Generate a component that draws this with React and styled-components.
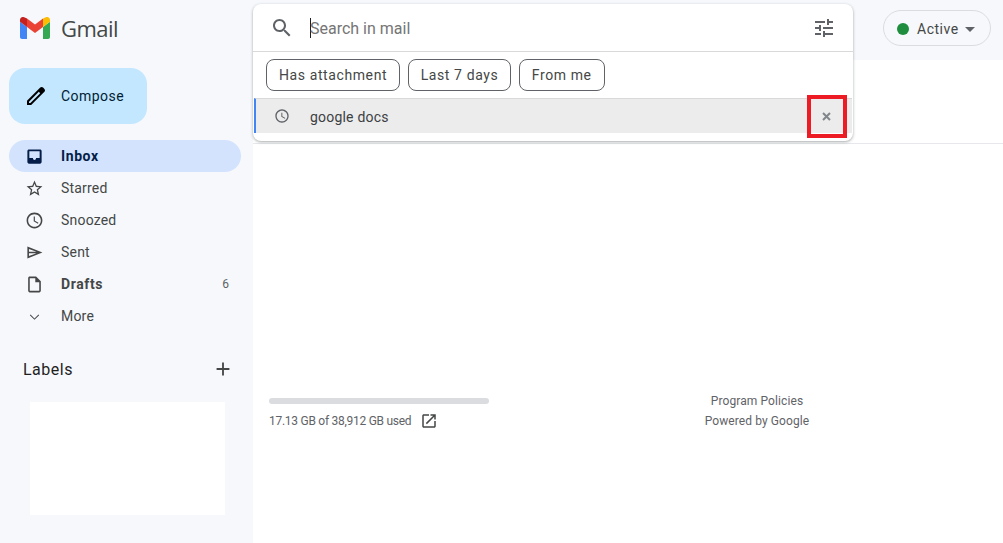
import React from "react";
import styled, { createGlobalStyle } from "styled-components";

const Global = createGlobalStyle`
  html, body { margin: 0; padding: 0; height: 100%; overflow: hidden; }
  body { font-family: Roboto, "Liberation Sans", sans-serif; background: #fff; }
`;

const Page = styled.div`
  display: flex;
  width: 1003px;
  height: 543px;
  overflow: hidden;
`;

const Sidebar = styled.aside`
  width: 253px;
  flex: none;
  background: #f6f8fc;
  display: flex;
  flex-direction: column;
`;

const Brand = styled.div`
  height: 56px;
  display: flex;
  align-items: center;
  padding-left: 20px;
  gap: 11px;
  color: #444746;
  font-family: "Open Sans", Roboto, sans-serif;
  font-size: 22px;
  letter-spacing: -0.55px;
`;

const Compose = styled.div`
  margin: 12px 0 16px 9px;
  width: 138px;
  height: 56px;
  border-radius: 16px;
  background: #c2e7ff;
  color: #001d35;
  display: flex;
  align-items: center;
  padding-left: 15px;
  box-sizing: border-box;
  gap: 13px;
  font-size: 14px;
  font-weight: 400;
  letter-spacing: 0.45px;
`;

const Nav = styled.nav`
  display: flex;
  flex-direction: column;
  width: 232px;
  margin-left: 9px;
`;

const NavRow = styled.div`
  height: 32px;
  border-radius: 16px;
  display: flex;
  align-items: center;
  padding: 0 12px 0 16px;
  gap: 17px;
  font-size: 14px;
  letter-spacing: ${(p) => (p.$bold ? "0.6px" : "0.2px")};
  color: ${(p) => (p.$active ? "#041e49" : "#444746")};
  font-weight: ${(p) => (p.$bold ? 700 : 400)};
  background: ${(p) => (p.$active ? "#d3e3fd" : "transparent")};
`;

const NavLabel = styled.span`
  flex: 1;
`;

const Count = styled.span`
  font-size: 12px;
  font-weight: 400;
  letter-spacing: 0;
  color: #5f6368;
`;

const LabelsHead = styled.div`
  margin: 25px 19px 0 23px;
  height: 24px;
  display: flex;
  align-items: center;
  justify-content: space-between;
  font-size: 16px;
  letter-spacing: 0.5px;
  color: #1f1f1f;
`;

const LabelsBox = styled.div`
  margin: 21px 0 0 30px;
  width: 195px;
  height: 113px;
  background: #fff;
`;

const Main = styled.main`
  position: relative;
  flex: 1;
  display: flex;
  flex-direction: column;
  background: #fff;
`;

const TopBar = styled.header`
  height: 60px;
  flex: none;
  background: #f6f8fc;
  display: flex;
  justify-content: flex-end;
  padding: 10px 12px 0 0;
  box-sizing: border-box;
`;

const StatusPill = styled.div`
  width: 108px;
  height: 36px;
  box-sizing: border-box;
  border: 1px solid #dadce0;
  border-radius: 18px;
  display: flex;
  align-items: center;
  padding: 2px 0 0 13px;
  font-size: 14px;
  font-weight: 400;
  letter-spacing: 0.5px;
  color: #444746;
`;

const Dot = styled.span`
  width: 12px;
  height: 12px;
  border-radius: 50%;
  background: #1e8e3e;
  margin-right: 8px;
`;

const Caret = styled.span`
  width: 0;
  height: 0;
  margin-left: 6px;
  border-left: 5px solid transparent;
  border-right: 5px solid transparent;
  border-top: 5px solid #5f6368;
`;

const Divider = styled.div`
  height: 83px;
  flex: none;
  border-bottom: 1px solid #e6e8eb;
`;

const Footer = styled.footer`
  display: flex;
  justify-content: space-between;
  padding: 254px 0 0 16px;
  font-size: 12px;
  color: #5f6368;
`;

const Storage = styled.div`
  width: 220px;
`;

const StorageBar = styled.div`
  height: 6px;
  border-radius: 3px;
  background: #dadce0;
`;

const StorageText = styled.div`
  margin-top: 8px;
  display: flex;
  align-items: center;
  gap: 9px;
  letter-spacing: -0.27px;
  white-space: nowrap;
`;

const Policies = styled.div`
  width: 108px;
  margin-right: 192px;
  margin-top: -7px;
  text-align: center;
  line-height: 20px;
  letter-spacing: 0.1px;
  white-space: nowrap;
`;

/* The search dropdown floats over the page */
const SearchPanel = styled.div`
  position: absolute;
  left: 0;
  top: 4px;
  width: 600px;
  height: 137px;
  background: #fff;
  border-radius: 8px;
  box-shadow: 0 1px 3px rgba(60, 64, 67, 0.45);
  display: flex;
  flex-direction: column;
  overflow: hidden;
`;

const SearchRow = styled.div`
  height: 48px;
  flex: none;
  box-sizing: border-box;
  display: flex;
  align-items: center;
  padding: 0 17px;
  border-bottom: 1px solid #d9d9d9;
`;

const SearchInput = styled.div`
  flex: 1;
  margin: 1px 0 0 16px;
  height: 20px;
  display: flex;
  align-items: center;
  font-size: 16px;
  color: #757575;
  border-left: 1px solid #1f1f1f;
`;

const Placeholder = styled.span`
  margin-left: -1px;
`;

const Chips = styled.div`
  height: 46px;
  flex: none;
  box-sizing: border-box;
  display: flex;
  gap: 7.5px;
  padding: 7px 0 0 13px;
`;

const Chip = styled.div`
  height: 32px;
  box-sizing: border-box;
  padding: 0 12px;
  border: 1px solid #5f6368;
  border-radius: 8px;
  display: flex;
  align-items: center;
  font-size: 14px;
  font-weight: 400;
  letter-spacing: 0.6px;
  color: #444746;
`;

const Suggestion = styled.div`
  height: 35px;
  flex: none;
  box-sizing: border-box;
  margin: 0 1px;
  background: #ececec;
  border-top: 1px solid #d9d9d9;
  border-left: 2px solid #4285f4;
  display: flex;
  align-items: center;
  padding-left: 18px;
  gap: 20px;
  font-size: 14px;
  letter-spacing: 0.2px;
  color: #3c4043;
`;

const SuggestionText = styled.span`
  flex: 1;
  padding-top: 2px;
`;

const RemoveX = styled.svg`
  margin-right: 21px;
`;

/* Red annotation rectangle drawn over the screenshot */
const Annotation = styled.div`
  position: absolute;
  left: 554px;
  top: 95px;
  width: 40px;
  height: 43px;
  box-sizing: border-box;
  border: 4px solid #ed1c24;
`;

const IconSvg = styled.svg`
  flex: none;
  fill: ${(p) => p.$color};
`;

const Icon = ({ d, size = 24, color = "#444746" }) => (
  <IconSvg width={size} height={size} viewBox="0 0 24 24" $color={color}>
    <path d={d} fillRule="evenodd" />
  </IconSvg>
);

const icons = {
  search: "M15.5 14h-.79l-.28-.27C15.41 12.59 16 11.11 16 9.5 16 5.91 13.09 3 9.5 3S3 5.91 3 9.5 5.91 16 9.5 16c1.61 0 3.09-.59 4.23-1.57l.27.28v.79l5 4.99L20.49 19l-4.99-5zm-6 0C7.01 14 5 11.99 5 9.5S7.01 5 9.5 5 14 7.01 14 9.5 11.99 14 9.5 14z",
  tune: "M3 17v2h6v-2H3zM3 5v2h10V5H3zm10 16v-2h8v-2h-8v-2h-2v6h2zM7 9v2H3v2h4v2h2V9H7zm14 4v-2H11v2h10zm-6-4h2V7h4V5h-4V3h-2v6z",
  schedule: "M11.99 2C6.47 2 2 6.48 2 12s4.47 10 9.99 10C17.52 22 22 17.52 22 12S17.52 2 11.99 2zM12 20c-4.42 0-8-3.58-8-8s3.58-8 8-8 8 3.58 8 8-3.58 8-8 8zm.5-13H11v6l5.25 3.15.75-1.23-4.5-2.67z",
  inbox: "M5 3h14c1.1 0 2 .9 2 2v14c0 1.1-.9 2-2 2H5c-1.1 0-2-.9-2-2V5c0-1.1.9-2 2-2zM5.5 5.5v8.5h4.500c0 1.400 1 2.500 2 2.500s2-1.100 2-2.500h4.500V5.500z",
  star: "M22 9.24l-7.19-.62L12 2 9.19 8.63 2 9.24l5.46 4.73L5.82 21 12 17.27 18.18 21l-1.63-7.03L22 9.24zM12 15.4l-3.76 2.27 1-4.28-3.32-2.88 4.38-.38L12 6.1l1.71 4.04 4.38.38-3.32 2.88 1 4.28L12 15.4z",
  send: "M3 4.500L22 12 3 19.500zM5 7.500V11h9.500zM5 13v3.500L14.500 13z",
  draft: "M14 2H6c-1.1 0-1.99.9-1.99 2L4 20c0 1.1.89 2 1.99 2H18c1.1 0 2-.9 2-2V8l-6-6zM6 20V4h7v5h5v11H6z",
  more: "M17 9.4L12 14.4 7 9.4 6.1 10.3 12 16.2 17.9 10.3z",
  add: "M19 13h-6v6h-2v-6H5v-2h6V5h2v6h6v2z",
  open: "M19 19H5V5h7V3H5c-1.11 0-2 .9-2 2v14c0 1.1.89 2 2 2h14c1.1 0 2-.9 2-2v-7h-2v7zM14 3v2h3.59l-9.83 9.83 1.41 1.41L19 6.41V10h2V3h-7z",
  edit: "M20.41 4.94l-1.35-1.35c-.78-.78-2.05-.78-2.83 0L3 16.82V21h4.18L20.41 7.77c.79-.78.79-2.05 0-2.83zm-14 14.12L5 19v-1.36l9.82-9.82 1.41 1.41-9.82 9.83z",
};

const GmailLogo = () => (
  <IconSvg width="30" height="22" viewBox="0 0 30 22">
    <path fill="#4285f4" d="M2 22h5V10L0 4.8V20c0 1.1.9 2 2 2z" />
    <path fill="#34a853" d="M23 22h5c1.1 0 2-.9 2-2V4.8L23 10z" />
    <path fill="#fbbc04" d="M23 1.5V10l7-5.2V3c0-2.5-2.8-3.9-4.8-2.4z" />
    <path fill="#ea4335" d="M7 10V1.5L15 7.500l8-6V10l-8 6z" />
    <path fill="#c5221f" d="M0 3v1.800L7 10V1.500L4.800.6C2.800-.9 0 .5 0 3z" />
  </IconSvg>
);

const navItems = [
  { label: "Inbox", icon: "inbox", active: true, bold: true, color: "#041e49" },
  { label: "Starred", icon: "star" },
  { label: "Snoozed", icon: "schedule" },
  { label: "Sent", icon: "send" },
  { label: "Drafts", icon: "draft", bold: true, count: 6 },
  { label: "More", icon: "more" },
];

export default function App() {
  return (
    <Page>
      <Global />
      <Sidebar>
        <Brand>
          <GmailLogo />
          <span>Gmail</span>
        </Brand>
        <Compose>
          <Icon d={icons.edit} color="#000" />
          <span>Compose</span>
        </Compose>
        <Nav>
          {navItems.map((n) => (
            <NavRow key={n.label} $active={n.active} $bold={n.bold}>
              <Icon d={icons[n.icon]} size={19} color={n.color || "#444746"} />
              <NavLabel>{n.label}</NavLabel>
              {n.count && <Count>{n.count}</Count>}
            </NavRow>
          ))}
        </Nav>
        <LabelsHead>
          <span>Labels</span>
          <Icon d={icons.add} size={22} />
        </LabelsHead>
        <LabelsBox />
      </Sidebar>
      <Main>
        <TopBar>
          <StatusPill>
            <Dot />
            Active
            <Caret />
          </StatusPill>
        </TopBar>
        <Divider />
        <Footer>
          <Storage>
            <StorageBar />
            <StorageText>
              <span>17.13 GB of 38,912 GB used</span>
              <Icon d={icons.open} size={18} color="#444746" />
            </StorageText>
          </Storage>
          <Policies>
            <div>Program Policies</div>
            <div>Powered by Google</div>
          </Policies>
        </Footer>
        <SearchPanel>
          <SearchRow>
            <Icon d={icons.search} color="#5f6368" />
            <SearchInput>
              <Placeholder>Search in mail</Placeholder>
            </SearchInput>
            <Icon d={icons.tune} color="#5f6368" />
          </SearchRow>
          <Chips>
            <Chip>Has attachment</Chip>
            <Chip>Last 7 days</Chip>
            <Chip>From me</Chip>
          </Chips>
          <Suggestion>
            <Icon d={icons.schedule} size={16} color="#5f6368" />
            <SuggestionText>google docs</SuggestionText>
            <RemoveX width="9" height="9" viewBox="0 0 9 9">
              <path d="M1 1l7 7M8 1L1 8" stroke="#80868b" strokeWidth="2" />
            </RemoveX>
          </Suggestion>
        </SearchPanel>
        <Annotation />
      </Main>
    </Page>
  );
}
